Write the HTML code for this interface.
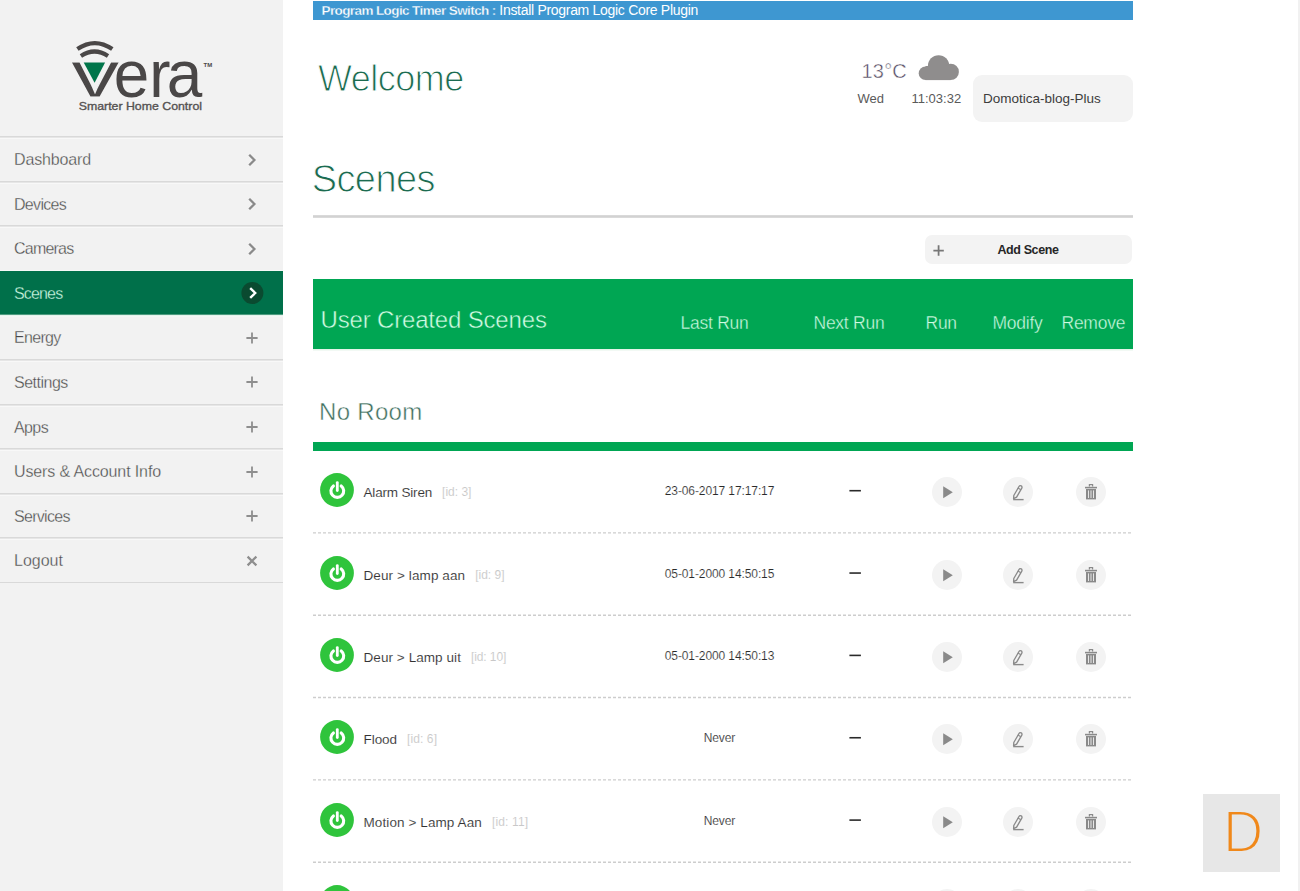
<!DOCTYPE html>
<html lang="en">
<head>
<meta charset="utf-8">
<title>Vera - Scenes</title>
<style>
*{box-sizing:border-box;margin:0;padding:0}
html,body{width:1300px;height:891px;overflow:hidden;background:#fff}
body{font-family:"Liberation Sans","DejaVu Sans",sans-serif;color:#3c3c3c;position:relative}
#side{position:absolute;left:0;top:0;width:283px;height:891px;background:#f2f2f2}
#logo{position:absolute;left:0;top:0;width:283px;height:136px}
#menu{position:absolute;left:0;top:136px;width:283px;list-style:none}
#menu li{-webkit-text-stroke:0.3px #f2f2f2;position:relative;height:44.6px;border-top:1px solid #d9d9d9;box-shadow:inset 0 1px 0 #e6e6e6,inset 0 2px 0 #f8f8f8;font-size:16px;line-height:46px;padding-left:14px;color:#484848;white-space:nowrap}
#menu li.last{border-bottom:1px solid #d9d9d9;height:45.6px}
#menu li.act{-webkit-text-stroke:0.3px #00704a;background:#00704a;color:#d2fbe6;border-top-color:#f6f9f7;box-shadow:none}
#menu li.act+li{border-top-color:#4d9b80;box-shadow:inset 0 1px 0 #e4f3eb,inset 0 2px 0 #f4f6f5}
#menu li .ic{position:absolute;left:240px;top:10.5px;width:24px;height:24px}
#main{position:absolute;left:312.5px;top:0;width:820px;height:891px}
#blue{position:absolute;left:0;top:1px;width:820px;height:19px;background:#3e97d1;color:#fff;font-size:14px;line-height:19px;padding-left:9px;white-space:nowrap}
#blue b{font-weight:bold;font-size:13.5px;letter-spacing:-0.6px;-webkit-text-stroke:0.3px #3e97d1}
#bluet{letter-spacing:-0.3px}
.h{position:absolute;white-space:nowrap;font-weight:normal}
.thin{-webkit-text-stroke:1px #fff}
.thing{-webkit-text-stroke:0.45px #00a653}
#noroom.thin{-webkit-text-stroke:0.45px #fff}
#temp.thin{-webkit-text-stroke:0.45px #fff}
#welcome{left:5.6px;top:56.2px;font-size:36px;line-height:46px;color:#1c6b50;letter-spacing:-0.55px}
#scenes{left:-0.8px;top:152px;font-size:38px;line-height:54px;color:#1c6b50;letter-spacing:-0.6px}
#rule{position:absolute;left:0;top:215px;width:820px;height:3px;background:linear-gradient(#dedede,#d2d2d2 40%,#d2d2d2 60%,#e0e0e0)}
#temp{left:549px;top:57.6px;letter-spacing:0.2px;font-size:20px;line-height:26px;color:#4e465c}
#day{left:545px;top:90.4px;font-size:13px;line-height:18px;color:#5a5a5a}
#time{left:599px;top:90.4px;font-size:13px;line-height:18px;color:#5a5a5a}
#cloud{position:absolute;left:602.5px;top:50px;width:50px;height:34px}
#acct{position:absolute;left:660px;top:74.6px;width:160px;height:47.4px;border-radius:9px;background:#f3f3f3;font-size:13.5px;line-height:48px;padding-left:10.5px;color:#3c3c3c;white-space:nowrap}
#add{position:absolute;left:612.4px;top:235.4px;width:207.6px;height:28.4px;border-radius:7px;background:#f3f3f3;font-size:12.5px;line-height:30px;font-weight:bold;color:#262626;letter-spacing:-0.4px;white-space:nowrap}
#add .pl{position:absolute;left:8.4px;top:9.4px;width:11.2px;height:11.2px}
#addt{position:absolute;left:72.6px;top:0}
#thead{position:absolute;left:0;top:278.8px;width:820px;height:70.6px;background:#00a653;color:#d0fce4;box-shadow:0 1.5px 0 #e6f4ea}
#thead span{position:absolute;white-space:nowrap}
#thead .c{-webkit-text-stroke:0.35px #00a653;font-size:17.5px;line-height:22px;top:33.4px;letter-spacing:-0.25px}
#noroom{left:6.6px;top:393.1px;letter-spacing:0.3px;font-size:24px;line-height:38px;color:#3f6f5e}
#gbar{position:absolute;left:0;top:441.9px;width:820px;height:8.8px;background:#00a653}
.row{position:absolute;left:0;width:820px;height:82.35px}
.row .pw{position:absolute;left:7.7px;top:22.45px;width:34px;height:34px}
.row .nm{-webkit-text-stroke:0.1px #fff;position:absolute;left:51px;top:32.3px;font-size:13.5px;line-height:20px;white-space:nowrap;color:#333}
.row .nm i{font-style:normal;font-size:12px;color:#c8c8c8;margin-left:10px;position:relative;top:-1px}
.row .lr{-webkit-text-stroke:0.15px #fff;position:absolute;left:307px;width:200px;top:31.2px;text-align:center;font-size:12px;line-height:18px;color:#2a2a2a;letter-spacing:-0.1px;white-space:nowrap}
#ov{position:absolute;left:0;top:0}
.row .b{position:absolute;top:26.3px;width:30px;height:30px;border-radius:50%;background:#f3f3f3}
.row .b svg{position:absolute;left:0;top:0;width:30px;height:30px}
#dbox{position:absolute;left:1203.3px;top:794.1px;width:77px;height:77.5px;background:#e7e7e7}
#dl{position:absolute;left:19.4px;top:-0.8px;color:#f0881a;font-size:60px;line-height:77px;transform:scaleX(0.93);transform-origin:0 0;-webkit-text-stroke:2px #e7e7e7}
#vline{position:absolute;left:1298px;top:0;width:2px;height:891px;background:#f1f1f1}
</style>
</head>
<body>
<svg width="0" height="0" style="position:absolute">
  <defs>
    <g id="i-pw"><circle cx="17" cy="17" r="16.9" fill="#2fc43c"/><path d="M13.4 12.9A6.4 6.4 0 1 0 21.2 12.9" fill="none" stroke="#fff" stroke-width="3.1" stroke-linecap="round"/><path d="M17.3 9.6v8" stroke="#fff" stroke-width="2.8" stroke-linecap="round"/></g>
    <g id="i-play"><path d="M11.2 9.2v12l9.6-6z" fill="#8a8a8a"/></g>
    <g id="i-pen" transform="translate(-1.2 0.3)"><path d="M12 18.2l5.2-9a1.6 1.6 0 0 1 2.8 1.6l-5.2 9-3 1.6z" fill="none" stroke="#8a8a8a" stroke-width="1.35" stroke-linejoin="round"/><path d="M16.2 10.8l2.8 1.6" stroke="#8a8a8a" stroke-width="1.1"/><path d="M11.4 22.3h10.4" stroke="#8a8a8a" stroke-width="1.4"/></g>
    <g id="i-bin"><path d="M9 10.6h12" stroke="#8a8a8a" stroke-width="1.6"/><path d="M13.4 9.6v-2h3.2v2" fill="none" stroke="#8a8a8a" stroke-width="1.2"/><path d="M10 12h10v10.4h-10z" fill="#8a8a8a"/><path d="M12.5 13.4v7.6M15 13.4v7.6M17.5 13.4v7.6" stroke="#f0f0f0" stroke-width="0.9"/></g>
  </defs>
</svg>
<div id="side">
  <div id="logo"><svg width="283" height="136" viewBox="0 0 283 136">
    <path d="M77.4 49.1Q94.8 37.1 112.3 49.1" fill="none" stroke="#4a4747" stroke-width="4.2"/>
    <path d="M80.9 55.9Q94.5 47.1 108 55.9" fill="none" stroke="#4a4747" stroke-width="4.2"/>
    <path d="M83.7 62.4h21.4L94.6 82.7z" fill="#00754a"/>
    <text id="lg-v" x="0" y="0" transform="translate(70.4 97.4) scale(1.47 1)" font-family="'Liberation Sans',sans-serif" font-size="67.5" fill="#4a4747" stroke="#f2f2f2" stroke-width="1">v</text>
    <text id="lg-era" transform="translate(0 97) scale(0.96 1)" x="118.4 155.6 173.6" y="0" font-family="'Liberation Sans',sans-serif" font-size="66.5" fill="#4a4747">era</text>
    <text x="203.6" y="67.4" font-family="'Liberation Sans',sans-serif" font-size="6" font-weight="bold" fill="#4a4747">TM</text>
    <text id="lg-tag" x="78.7" y="109.5" font-family="'Liberation Sans',sans-serif" font-size="11.6" fill="#555252" stroke="#555252" stroke-width="0.35" textLength="123.3" lengthAdjust="spacingAndGlyphs">Smarter Home Control</text>
  </svg></div>
  <ul id="menu">
    <li><span id="m1" style="letter-spacing:-0.15px">Dashboard</span><svg class="ic" viewBox="0 0 24 24"><path d="M9.2 6.8l5.2 5.2-5.2 5.2" fill="none" stroke="#8a8a8a" stroke-width="2.3"/></svg></li>
    <li><span id="m2" style="letter-spacing:-0.68px">Devices</span><svg class="ic" viewBox="0 0 24 24"><path d="M9.2 6.8l5.2 5.2-5.2 5.2" fill="none" stroke="#8a8a8a" stroke-width="2.3"/></svg></li>
    <li><span id="m3" style="letter-spacing:-0.78px">Cameras</span><svg class="ic" viewBox="0 0 24 24"><path d="M9.2 6.8l5.2 5.2-5.2 5.2" fill="none" stroke="#8a8a8a" stroke-width="2.3"/></svg></li>
    <li class="act"><span id="m4" style="letter-spacing:-0.84px">Scenes</span><svg class="ic" viewBox="0 0 24 24"><circle cx="12.4" cy="12" r="11" fill="#0a4a30"/><path d="M10.2 7.2l5 4.8-5 4.8" fill="none" stroke="#fff" stroke-width="2.4"/></svg></li>
    <li><span id="m5" style="letter-spacing:-0.68px">Energy</span><svg class="ic" viewBox="0 0 24 24"><path d="M6.4 12h11.2M12 6.4v11.2" fill="none" stroke="#8e8e8e" stroke-width="1.8"/></svg></li>
    <li><span id="m6" style="letter-spacing:-0.5px">Settings</span><svg class="ic" viewBox="0 0 24 24"><path d="M6.4 12h11.2M12 6.4v11.2" fill="none" stroke="#8e8e8e" stroke-width="1.8"/></svg></li>
    <li><span id="m7" style="letter-spacing:-0.6px">Apps</span><svg class="ic" viewBox="0 0 24 24"><path d="M6.4 12h11.2M12 6.4v11.2" fill="none" stroke="#8e8e8e" stroke-width="1.8"/></svg></li>
    <li><span id="m8" style="letter-spacing:-0.12px">Users &amp; Account Info</span><svg class="ic" viewBox="0 0 24 24"><path d="M6.4 12h11.2M12 6.4v11.2" fill="none" stroke="#8e8e8e" stroke-width="1.8"/></svg></li>
    <li><span id="m9" style="letter-spacing:-0.71px">Services</span><svg class="ic" viewBox="0 0 24 24"><path d="M6.4 12h11.2M12 6.4v11.2" fill="none" stroke="#8e8e8e" stroke-width="1.8"/></svg></li>
    <li class="last"><span id="m10" style="letter-spacing:0px">Logout</span><svg class="ic" viewBox="0 0 24 24"><path d="M7.6 7.6l8.8 8.8M16.4 7.6l-8.8 8.8" fill="none" stroke="#8e8e8e" stroke-width="2.2"/></svg></li>
  </ul>
</div>
<div id="main">
  <div id="blue"><span id="bluet"><b id="blueb">Program Logic Timer Switch :</b> Install Program Logic Core Plugin</span></div>
  <div class="h thin" id="welcome">Welcome</div>
  <div class="h thin" id="temp">13°C</div>
  <svg id="cloud" viewBox="915 50 50 34"><g fill="#8f8d8d"><circle cx="925.5" cy="73.3" r="6.8"/><circle cx="938.6" cy="65.9" r="10.7"/><circle cx="950.7" cy="71.9" r="8.2"/><rect x="925.5" y="66" width="25.2" height="14.1"/></g></svg>
  <div class="h" id="day">Wed</div>
  <div class="h" id="time">11:03:32</div>
  <div id="acct"><span id="acctt">Domotica-blog-Plus</span></div>
  <div class="h thin" id="scenes">Scenes</div>
  <div id="rule"></div>
  <div id="add"><svg class="pl" viewBox="0 0 12 12"><path d="M0.4 6h11.2M6 0.4v11.2" stroke="#777" stroke-width="1.9"/></svg><span id="addt">Add Scene</span></div>
  <div id="thead">
    <span id="uc" class="thing" style="left:8px;top:25px;font-size:24px;line-height:32px;letter-spacing:-0.17px">User Created Scenes</span>
    <span class="c" id="lastrun" style="left:368px">Last Run</span>
    <span class="c" id="nextrun" style="left:501px">Next Run</span>
    <span class="c" id="run" style="left:613px">Run</span>
    <span class="c" id="modify" style="left:680px">Modify</span>
    <span class="c" id="remove" style="left:749px">Remove</span>
  </div>
  <div class="h thin" id="noroom">No Room</div>
  <div id="gbar"></div>
  <div class="row" style="top:451.0px">
    <svg class="pw" viewBox="0 0 34 34"><use href="#i-pw"/></svg>
    <div class="nm"><span id="n1" style="letter-spacing:-0.18px">Alarm Siren</span><i id="i1" style="letter-spacing:0px">[id: 3]</i></div>
    <div class="lr"><span id="d1">23-06-2017 17:17:17</span></div>
    <div class="b" style="left:619px"><svg viewBox="0 0 30 30"><use href="#i-play"/></svg></div>
    <div class="b" style="left:690.6px"><svg viewBox="0 0 30 30"><use href="#i-pen"/></svg></div>
    <div class="b" style="left:763.2px"><svg viewBox="0 0 30 30"><use href="#i-bin"/></svg></div>
  </div>
  <div class="row" style="top:533.4px">
    <svg class="pw" viewBox="0 0 34 34"><use href="#i-pw"/></svg>
    <div class="nm"><span id="n2" style="letter-spacing:0.1px">Deur &gt; lamp aan</span><i id="i2" style="letter-spacing:0px">[id: 9]</i></div>
    <div class="lr"><span id="d2">05-01-2000 14:50:15</span></div>
    <div class="b" style="left:619px"><svg viewBox="0 0 30 30"><use href="#i-play"/></svg></div>
    <div class="b" style="left:690.6px"><svg viewBox="0 0 30 30"><use href="#i-pen"/></svg></div>
    <div class="b" style="left:763.2px"><svg viewBox="0 0 30 30"><use href="#i-bin"/></svg></div>
  </div>
  <div class="row" style="top:615.7px">
    <svg class="pw" viewBox="0 0 34 34"><use href="#i-pw"/></svg>
    <div class="nm"><span id="n3" style="letter-spacing:0.07px">Deur &gt; Lamp uit</span><i id="i3" style="letter-spacing:-0.1px">[id: 10]</i></div>
    <div class="lr"><span id="d3">05-01-2000 14:50:13</span></div>
    <div class="b" style="left:619px"><svg viewBox="0 0 30 30"><use href="#i-play"/></svg></div>
    <div class="b" style="left:690.6px"><svg viewBox="0 0 30 30"><use href="#i-pen"/></svg></div>
    <div class="b" style="left:763.2px"><svg viewBox="0 0 30 30"><use href="#i-bin"/></svg></div>
  </div>
  <div class="row" style="top:698.0px">
    <svg class="pw" viewBox="0 0 34 34"><use href="#i-pw"/></svg>
    <div class="nm"><span id="n4" style="letter-spacing:-0.05px">Flood</span><i id="i4" style="letter-spacing:0.1px">[id: 6]</i></div>
    <div class="lr"><span id="d4">Never</span></div>
    <div class="b" style="left:619px"><svg viewBox="0 0 30 30"><use href="#i-play"/></svg></div>
    <div class="b" style="left:690.6px"><svg viewBox="0 0 30 30"><use href="#i-pen"/></svg></div>
    <div class="b" style="left:763.2px"><svg viewBox="0 0 30 30"><use href="#i-bin"/></svg></div>
  </div>
  <div class="row" style="top:780.4px">
    <svg class="pw" viewBox="0 0 34 34"><use href="#i-pw"/></svg>
    <div class="nm"><span id="n5" style="letter-spacing:0.1px">Motion &gt; Lamp Aan</span><i id="i5" style="letter-spacing:0.15px">[id: 11]</i></div>
    <div class="lr"><span id="d5">Never</span></div>
    <div class="b" style="left:619px"><svg viewBox="0 0 30 30"><use href="#i-play"/></svg></div>
    <div class="b" style="left:690.6px"><svg viewBox="0 0 30 30"><use href="#i-pen"/></svg></div>
    <div class="b" style="left:763.2px"><svg viewBox="0 0 30 30"><use href="#i-bin"/></svg></div>
  </div>
  <div class="row" style="top:862.8px">
    <svg class="pw" viewBox="0 0 34 34"><use href="#i-pw"/></svg>
    <div class="nm"><span id="n6" style="letter-spacing:0px">Motion &gt; Lamp Uit</span><i id="i6" style="letter-spacing:0px">[id: 12]</i></div>
    <div class="lr"><span id="d6">Never</span></div>
    <div class="b" style="left:619px"><svg viewBox="0 0 30 30"><use href="#i-play"/></svg></div>
    <div class="b" style="left:690.6px"><svg viewBox="0 0 30 30"><use href="#i-pen"/></svg></div>
    <div class="b" style="left:763.2px"><svg viewBox="0 0 30 30"><use href="#i-bin"/></svg></div>
  </div>
  <svg id="ov" width="820" height="891" viewBox="0 0 820 891"><path d="M0 532.90h820" stroke="#cdcdcd" stroke-width="1.4" stroke-dasharray="3 2" fill="none"/><path d="M536.4 490.70h11.5" stroke="#2a2a2a" stroke-width="1.6" fill="none"/><path d="M0 615.22h820" stroke="#cdcdcd" stroke-width="1.4" stroke-dasharray="3 2" fill="none"/><path d="M536.4 573.05h11.5" stroke="#2a2a2a" stroke-width="1.6" fill="none"/><path d="M0 697.54h820" stroke="#cdcdcd" stroke-width="1.4" stroke-dasharray="3 2" fill="none"/><path d="M536.4 655.40h11.5" stroke="#2a2a2a" stroke-width="1.6" fill="none"/><path d="M0 779.86h820" stroke="#cdcdcd" stroke-width="1.4" stroke-dasharray="3 2" fill="none"/><path d="M536.4 737.75h11.5" stroke="#2a2a2a" stroke-width="1.6" fill="none"/><path d="M0 862.18h820" stroke="#cdcdcd" stroke-width="1.4" stroke-dasharray="3 2" fill="none"/><path d="M536.4 820.10h11.5" stroke="#2a2a2a" stroke-width="1.6" fill="none"/><path d="M0 944.50h820" stroke="#cdcdcd" stroke-width="1.4" stroke-dasharray="3 2" fill="none"/><path d="M536.4 902.45h11.5" stroke="#2a2a2a" stroke-width="1.6" fill="none"/></svg>
</div>
<div id="dbox"><span id="dl">D</span></div>
<div id="vline"></div>
</body>
</html>
